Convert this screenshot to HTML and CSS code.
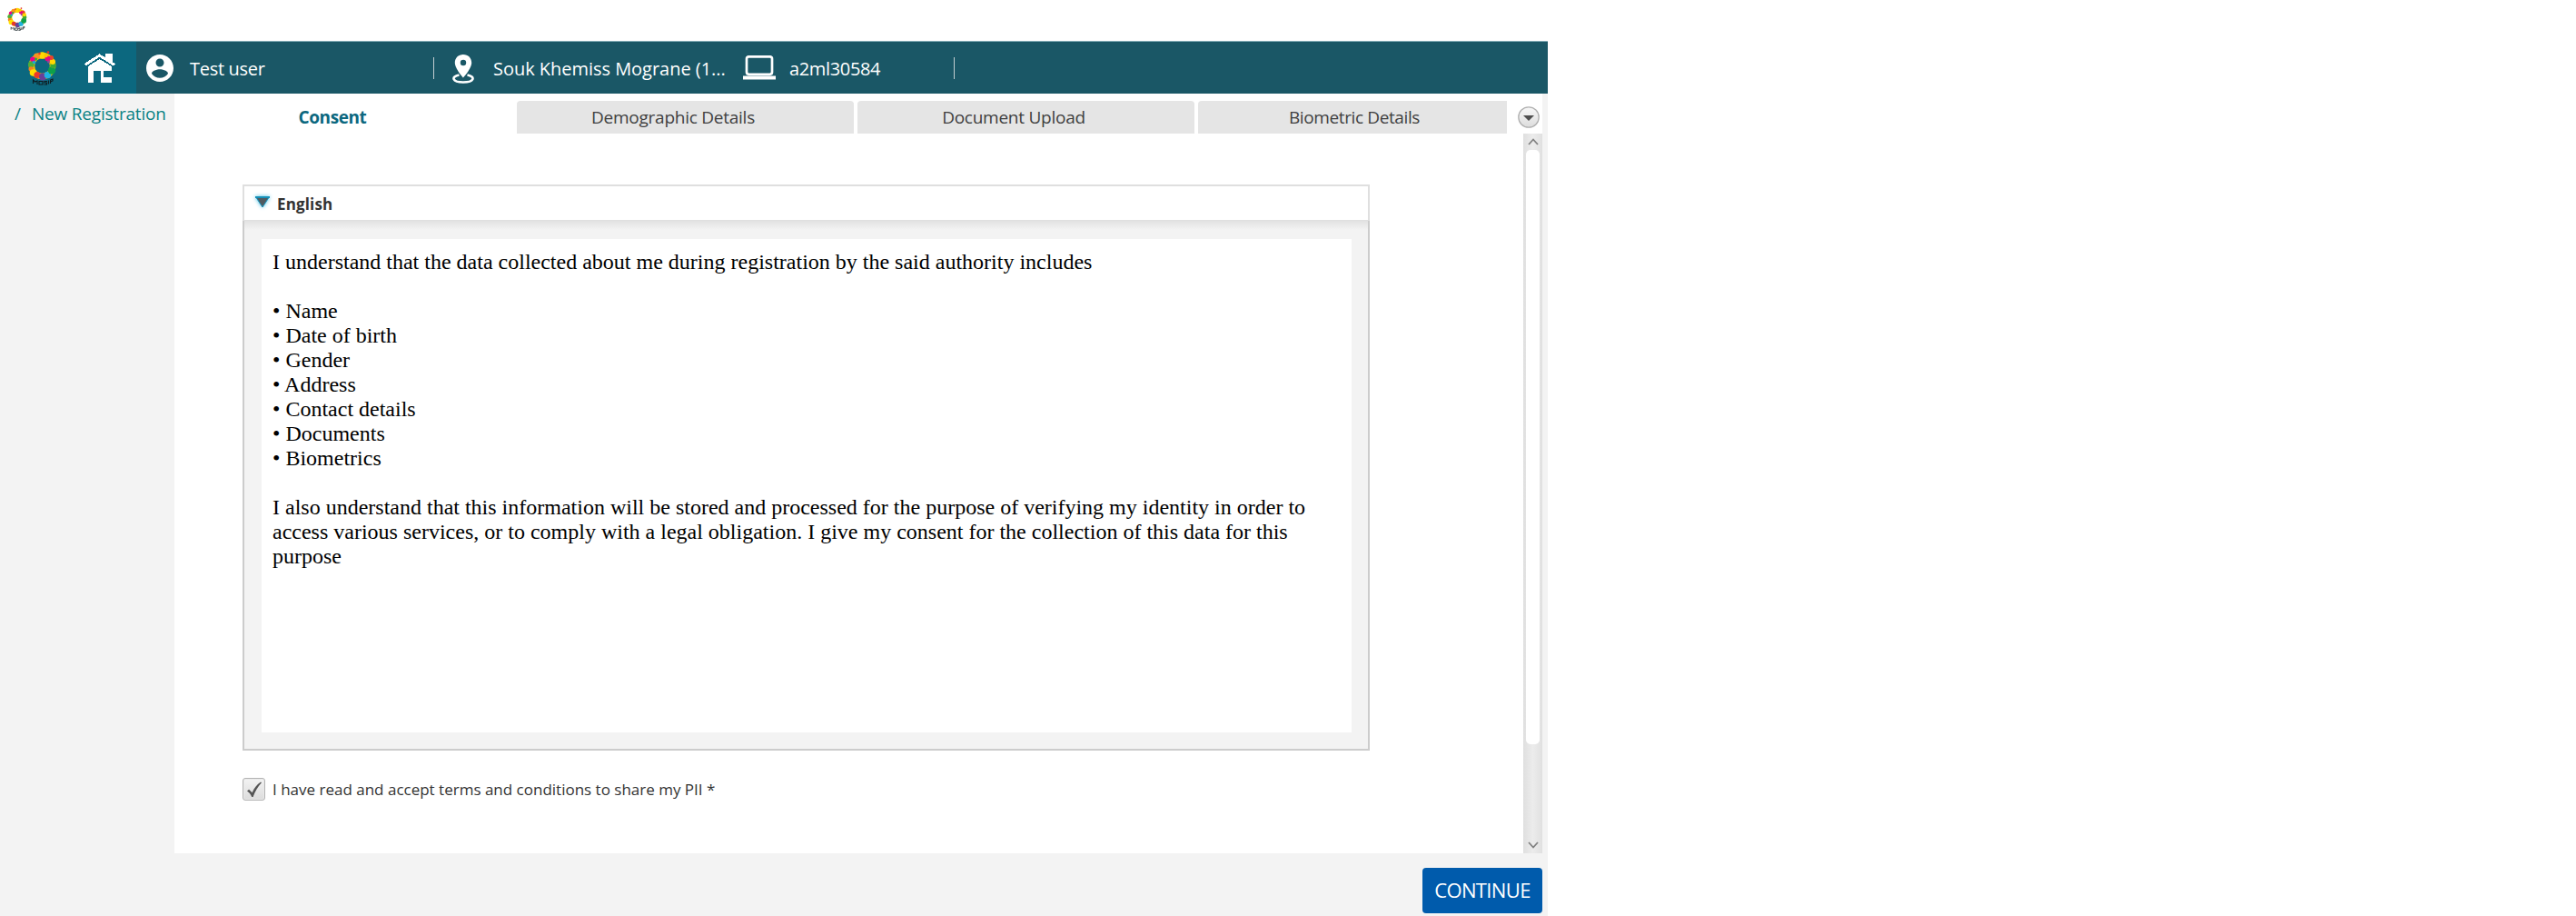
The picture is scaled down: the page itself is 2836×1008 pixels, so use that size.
FILE: index.html
```html
<!DOCTYPE html>
<html lang="en">
<head>
<meta charset="utf-8">
<title>New Registration</title>
<link rel="stylesheet" href="styles.css">
</head>
<body>
<svg class="defs" aria-hidden="true">
  <symbol id="logo" viewBox="0 0 32 38">
    <circle cx="16" cy="16.5" r="11.6" fill="none" stroke="#f4c400" stroke-width="6.5"/>
    <circle cx="16" cy="5" r="3.8" fill="#ffd800"/>
    <circle cx="10" cy="6" r="3.4" fill="#f7931e"/>
    <circle cx="5.600" cy="9.500" r="3" fill="#ec008c"/>
    <circle cx="3.800" cy="15" r="3.400" fill="#4caf3a"/>
    <circle cx="7" cy="12.500" r="1.800" fill="#19a6d8"/>
    <circle cx="3.800" cy="20" r="2.800" fill="#f58220"/>
    <circle cx="6" cy="24" r="3.800" fill="#ffe000"/>
    <circle cx="10.500" cy="26.500" r="3.600" fill="#e8392b"/>
    <circle cx="16.500" cy="28.500" r="4" fill="#6a3f98"/>
    <circle cx="22" cy="26.500" r="3.800" fill="#1fb3e3"/>
    <circle cx="26.500" cy="21.500" r="4.200" fill="#0da14a"/>
    <circle cx="28" cy="16" r="3.200" fill="#39a935"/>
    <circle cx="27.500" cy="12" r="3" fill="#ffd800"/>
    <circle cx="26" cy="7.500" r="2.500" fill="#e8432b"/>
    <circle cx="22" cy="8.500" r="3" fill="#e5097f"/>
    <circle cx="20" cy="5" r="2.300" fill="#fbc400"/>
    <circle cx="13" cy="3" r="1.300" fill="#e8392b"/>
    <circle cx="22.500" cy="1.500" r="1.300" fill="#e8392b"/>
    <circle cx="23" cy="12" r="1.500" fill="#8a4a9e"/>
    <circle cx="9" cy="9" r="1.600" fill="#39a935"/>
    <path d="M6 36v-4l2 2 2.500-1v4M12.500 33.500h4v3.500h-4zM21.500 33.500h-3v1.500h2.500v2h-3M23 32.500v4M25 36v-4l2.500-1v2l-2.500 1" fill="none" stroke="#101c20" stroke-width="1.100"/>
  </symbol>
</svg>

<div class="window">
  <div class="titlebar"><svg class="titlebar-logo"><use href="#logo"/></svg></div>

  <header class="header">
    <div class="brand">
      <svg class="brand-logo"><use href="#logo"/></svg>
      <svg class="home" viewBox="0 0 34 32" shape-rendering="crispEdges">
        <path d="M0 11 16.500.300 22.500 4V.300h8V9l3.500 2.500-2 2L16.500 3.700 2 13.500z" fill="#fff"/>
        <path d="M4 14 16.500 6 30 14v17.500H17.500V19H9.500v12.500H4zM21 19v7h8.500v-7z" fill="#fff" fill-rule="evenodd"/>
      </svg>
    </div>
    <div class="user">
      <svg class="user-icon" viewBox="2 2 20 20"><path fill="#fff" d="M12 2C6.480 2 2 6.480 2 12s4.480 10 10 10 10-4.480 10-10S17.520 2 12 2zm0 3c1.660 0 3 1.340 3 3s-1.340 3-3 3-3-1.340-3-3 1.340-3 3-3zm0 14.200c-2.500 0-4.710-1.280-6-3.220.030-1.990 4-3.080 6-3.080 1.990 0 5.970 1.090 6 3.080-1.290 1.940-3.500 3.220-6 3.220z"/></svg>
      <span class="user-name">Test user</span>
    </div>
    <div class="center">
      <svg class="pin" viewBox="0 0 24 32">
        <path d="M7.500 22.500C-2 24.500 0 30.500 12 30.500s14-6 4.500-8" fill="none" stroke="#fff" stroke-width="2.600"/>
        <path fill="#fff" fill-rule="evenodd" d="M12 0C6.500 0 2.800 3.900 2.800 9c0 6.500 9.200 16.500 9.200 16.500S21.200 15.500 21.200 9C21.200 3.900 17.500 0 12 0zm0 5.800a3.200 3.200 0 1 1 0 6.400 3.200 3.200 0 0 1 0-6.400z"/>
      </svg>
      <span class="center-name">Souk Khemiss Mograne (1...</span>
    </div>
    <div class="machine">
      <svg class="laptop" viewBox="0 0 36 27"><rect x="4" y="1.300" width="28" height="19.500" rx="2.500" fill="none" stroke="#fff" stroke-width="2.700"/><path d="M0 22.500h36v4H0z" fill="#fff"/></svg>
      <span class="machine-name">a2ml30584</span>
    </div>
  </header>

  <div class="body">
    <nav class="crumbs"><span>/</span><span class="crumb">New Registration</span></nav>
    <main class="main">
      <div class="tabs">
        <div class="tab active"><span>Consent</span></div>
        <div class="tab">Demographic Details</div>
        <div class="tab">Document Upload</div>
        <div class="tab last">Biometric Details</div>
        <svg class="more" viewBox="0 0 24 24">
          <defs><linearGradient id="g" x2="0" y2="1"><stop stop-color="#f8f8f8"/><stop offset="1" stop-color="#dcdcdc"/></linearGradient></defs>
          <circle cx="12" cy="12" r="11.200" fill="url(#g)" stroke="#b0b0b0" stroke-width="1.300"/>
          <path d="M6 10h12l-6 6z" fill="#4f4f4f"/>
        </svg>
      </div>
      <div class="scroller">
        <div class="content">
          <section class="panel">
            <div class="panel-head">
              <svg class="arrow" viewBox="0 0 16 13"><path d="M.500.500h15L8 12z" fill="#4f5a60"/><path d="M0 1h16" stroke="#1590b8" stroke-width="2"/><path d="M.500.500 8 12 15.500.500" fill="none" stroke="#1590b8"/></svg>
              <h2>English</h2>
            </div>
            <div class="panel-body">
              <div class="consent">
                <p>I understand that the data collected about me during registration by the said authority includes</p>
                <ul>
                  <li>• Name</li>
                  <li>• Date of birth</li>
                  <li>• Gender</li>
                  <li>• Address</li>
                  <li>• Contact details</li>
                  <li>• Documents</li>
                  <li>• Biometrics</li>
                </ul>
                <p>I also understand that this information will be stored and processed for the purpose of verifying my identity in order to access various services, or to comply with a legal obligation. I give my consent for the collection of this data for this purpose</p>
              </div>
            </div>
          </section>
          <div class="accept">
            <span class="box"><svg viewBox="0 0 17 18"><path d="M0 10.500 2.200 8.800 6 12.500C8.500 7 11.500 2.800 16 0l1 .800C12.500 5.500 9.500 11 7 17.500H5.500C4 14 2.500 12 0 10.500z" fill="#555"/></svg></span>
            <span>I have read and accept terms and conditions to share my PII *</span>
          </div>
        </div>
        <div class="scrollbar">
          <svg class="chev" viewBox="0 0 12 8"><path d="M1 7 6 1.500 11 7" fill="none" stroke="#828282" stroke-width="1.800"/></svg>
          <div class="thumb"></div>
          <svg class="chev down" viewBox="0 0 12 8"><path d="M1 1 6 6.500 11 1" fill="none" stroke="#828282" stroke-width="1.800"/></svg>
        </div>
      </div>
    </main>
  </div>

  <footer class="footer"><button class="continue">CONTINUE</button></footer>
</div>
</body>
</html>
```

FILE: styles.css
```css
* { box-sizing: border-box; }
body { margin: 0; background: #fff; font-family: "Open Sans", "Noto Sans", sans-serif; color: #333; }
h2, p, ul { margin: 0; padding: 0; }
svg { display: block; flex: none; }
.defs { position: absolute; width: 0; height: 0; }

.window { width: 1704px; height: 1008px; display: flex; flex-direction: column; overflow: hidden; }
.titlebar { height: 45px; padding: 8px 0 0 6px; }
.titlebar-logo { width: 26px; height: 26px; }

.header { height: 58px; border-top: 1px solid #7fa9b3; background: #1a5766; display: flex; color: #fff; font-size: 20px; white-space: nowrap; }
.header > div { display: flex; align-items: center; }
.header span { padding-top: 1px; }
.brand { width: 150px; padding-left: 30px; background: #0c687f; }
.brand-logo { width: 33px; height: 38px; margin-right: 30px; }
.home { width: 34px; height: 32px; }
.user { width: 328px; padding-left: 11px; }
.user-icon { width: 30px; height: 30px; margin-right: 18px; }
.user-name { letter-spacing: -0.3px; }
.user::after, .machine::after { content: ""; width: 1px; height: 24px; margin-left: auto; background: #c3cfd2; }
.center { width: 340px; padding-left: 20px; }
.pin { width: 24px; height: 32px; margin: 2px 21px 0 0; }
.center-name { letter-spacing: -0.03px; }
.machine { width: 233px; }
.laptop { width: 36px; height: 27px; margin-right: 15px; }
.machine-name { letter-spacing: -0.35px; }

.body { height: 836px; display: flex; background: #f3f3f3; }
.crumbs { width: 192px; padding-left: 16px; display: flex; gap: 12px; font-size: 19px; line-height: 44px; color: #0b8285; white-space: nowrap; }
.crumb { letter-spacing: -0.2px; }
.main { width: 1506px; background: #fff; display: flex; flex-direction: column; }

.tabs { height: 44px; padding-top: 8px; display: flex; gap: 4px; }
.tab { width: 371px; height: 36px; padding-right: 27px; border-radius: 4px 4px 0 0; background: #e5e5e5; color: #404040; text-align: center; font-size: 19px; line-height: 36px; letter-spacing: -0.25px; }
.tab.active { width: 373px; padding: 0 25px 0 0; background: #fff; color: #0c687f; font-weight: 700; letter-spacing: -0.42px; }
.tab.last { width: 340px; padding: 0 0 0 4px; border-radius: 4px 0 0 0; letter-spacing: -0.38px; }
.more { width: 24px; height: 24px; margin: 6px 0 0 8px; }

.scroller { height: 792px; display: flex; }
.content { flex: 1; padding: 56px 0 0 75px; }
.panel { width: 1241px; height: 623px; display: flex; flex-direction: column; }
.panel-head { height: 40px; padding: 2px 0 0 12px; display: flex; align-items: center; gap: 8px; border: 2px solid #dfdfdf; border-bottom-width: 1px; }
.panel-head h2 { font-size: 17px; line-height: 40px; letter-spacing: 0.15px; }
.arrow { width: 16px; height: 13px; margin-bottom: 5px; overflow: visible; filter: drop-shadow(0 0 2px #4cc0e6); }
.panel-body { flex: 1; padding: 20px 18px 18px 19px; border: 2px solid #ccc; border-top: 0; background: linear-gradient(#e2e2e2, #f3f3f3 10px); }
.consent { height: 543px; padding: 12px; background: #fff; color: #000; font: 24px/27px "Liberation Serif", "Times New Roman", serif; }
.consent ul { margin: 27px 0; list-style: none; }

.accept { margin-top: 30px; display: flex; align-items: center; gap: 8px; font-size: 17px; line-height: 25px; }
.box { width: 25px; height: 25px; padding: 3px 3px 0 4px; border: 1px solid #b3b3b3; border-radius: 3px; background: linear-gradient(#f3f3f3, #dcdcdc); box-shadow: inset 0 0 0 1px #e9e9e9; }
.box svg { width: 16px; height: 18px; }

.scrollbar { width: 21px; padding: 5px 0; display: flex; flex-direction: column; align-items: center; background: linear-gradient(90deg, #dfdfdf, #ececec 50%, #e0e0e0); }
.thumb { width: 15px; height: 654px; margin-top: 5px; border-radius: 5px; background: #fff; }
.chev { width: 12px; height: 8px; }
.down { margin-top: auto; }

.footer { height: 69px; padding: 16px 6px 0 0; background: #f3f3f3; display: flex; justify-content: flex-end; }
.continue { width: 132px; height: 50px; padding: 0 0 2px; border: 0; border-radius: 4px; background: #005bac; color: #fff; font: 22px/48px "Open Sans", sans-serif; letter-spacing: -0.63px; }
```
